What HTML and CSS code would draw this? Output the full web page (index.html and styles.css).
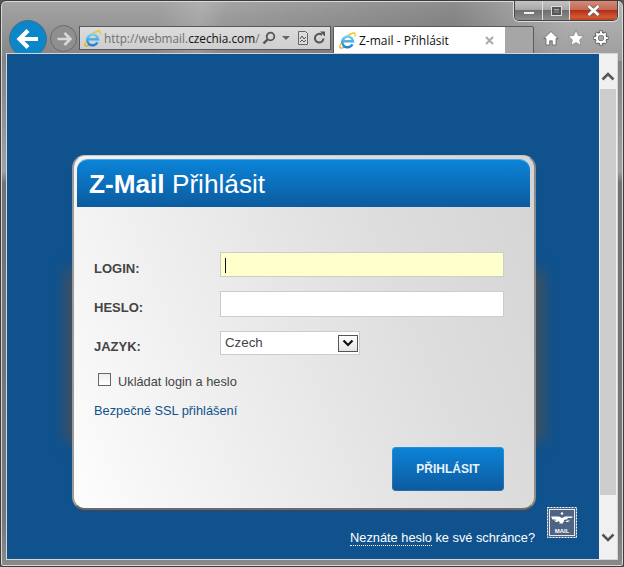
FILE: index.html
```html
<!DOCTYPE html>
<html lang="cs">
<head>
<meta charset="utf-8">
<title>Z-mail - Přihlásit</title>
<link rel="stylesheet" href="styles.css">
</head>
<body>
<svg class="defs" width="0" height="0" aria-hidden="true">
  <defs>
    <linearGradient id="ieblue" x1="0" y1="0" x2="0" y2="1">
      <stop offset="0" stop-color="#6fd0f6"/>
      <stop offset="1" stop-color="#1c82d4"/>
    </linearGradient>
    <symbol id="ie" viewBox="0 0 17 17">
      <path d="M1 13.500C3.500 7.500 9.500 2 14 1c2.200-.4 2.800 1.300 1.800 3.500" fill="none" stroke="#f5c518" stroke-width="1.300"/>
      <path d="M1 13.500c-.9 2.600 1.200 3.300 4.300 1.700" fill="none" stroke="#f0a818" stroke-width="1.300"/>
      <path d="M3.700 9.300h10.300A5.400 5.400 0 1 0 13.500 12.300" fill="none" stroke="url(#ieblue)" stroke-width="2.500"/>
    </symbol>
  </defs>
</svg>
<div class="window">
  <div class="wincontrols">
    <span class="wc wc-min"><i></i></span>
    <span class="wc wc-max"><i></i></span>
    <span class="wc wc-close">
      <svg width="15" height="11" viewBox="0 0 15 11"><path d="M2.500 1l10 9M12.500 1l-10 9" stroke="#666" stroke-width="4.200" fill="none"/><path d="M2.500 1l10 9M12.500 1l-10 9" stroke="#fff" stroke-width="2.600" fill="none"/></svg>
    </span>
  </div>
  <header class="toolbar">
    <span class="back">
      <svg width="24" height="22" viewBox="0 0 24 22"><path d="M12 2.500L3.500 11l8.500 8.500M4 11h18" fill="none" stroke="#fff" stroke-width="4.200"/></svg>
    </span>
    <span class="forward">
      <svg width="16" height="16" viewBox="0 0 16 16"><path d="M8.500 2l6 6-6 6M14 8H1.500" fill="none" stroke="#d8d8d8" stroke-width="2.600"/></svg>
    </span>
    <div class="address">
      <svg class="ie" width="17" height="17"><use href="#ie"/></svg>
      <span class="url">http://webmail.<b>czechia.com</b>/</span>
      <svg class="a-search" width="14" height="14" viewBox="0 0 14 14"><circle cx="8.500" cy="5.500" r="3.800" fill="none" stroke="#555" stroke-width="1.800"/><path d="M5.500 8.500L1.500 12.500" stroke="#555" stroke-width="2.400"/></svg>
      <span class="a-drop"></span>
      <svg class="a-compat" width="10" height="14" viewBox="0 0 10 14"><path d="M.5.500h7l2 2v11h-9z" fill="#ddd" stroke="#666"/><path d="M2 8l2-3 2 3 2-2M2 11l2-2 2 2 2-2" fill="none" stroke="#555"/></svg>
      <svg class="a-refresh" width="13" height="14" viewBox="0 0 13 14"><path d="M10.500 7.500a4.300 4.300 0 1 1-1.500-3.600" fill="none" stroke="#555" stroke-width="2"/><path d="M7 .5h5v5z" fill="#555"/></svg>
    </div>
    <div class="tab">
      <svg width="17" height="17"><use href="#ie"/></svg>
      <span class="tab-title">Z-mail - Přihlásit</span>
      <svg class="tab-x" width="9" height="9" viewBox="0 0 9 9"><path d="M1 1l7 7M8 1L1 8" stroke="#aaa" stroke-width="2"/></svg>
    </div>
    <div class="newtab"></div>
    <div class="tools">
      <svg width="16" height="16" viewBox="0 0 16 16"><path d="M8 1.500L.8 8.500H3V15h3.700v-4.200h2.600V15H13V8.500h2.200z" fill="#fff" stroke="#555" stroke-width=".7"/></svg>
      <svg width="16" height="16" viewBox="0 0 16 16"><path d="M8 .5l2.300 5 5.400.6-4 3.700 1.100 5.400L8 12.500l-4.800 2.700 1.100-5.400-4-3.700 5.400-.6z" fill="#fff" stroke="#666" stroke-width=".5"/></svg>
      <svg width="16" height="16" viewBox="0 0 16 16"><path d="M8 .5v3M8 12.500v3M.5 8h3M12.500 8h3M2.700 2.700l2.100 2.100M11.200 11.200l2.100 2.100M13.300 2.700l-2.100 2.100M4.800 11.200l-2.100 2.100" stroke="#5a5a5a" stroke-width="3.400"/><circle cx="8" cy="8" r="4.400" fill="none" stroke="#5a5a5a" stroke-width="3.600"/><path d="M8 1.200v3M8 11.800v3M1.200 8h3M11.800 8h3M3.200 3.200l2 2M10.800 10.800l2 2M12.800 3.200l-2 2M5.200 10.800l-2 2" stroke="#fff" stroke-width="2"/><circle cx="8" cy="8" r="4.200" fill="none" stroke="#fff" stroke-width="2.200"/></svg>
    </div>
  </header>
  <div class="viewport">
    <main class="page">
      <section class="card">
        <h1 class="card-title"><b>Z-Mail</b> Přihlásit</h1>
        <form class="form">
          <div class="row row-login">
            <label class="lbl">LOGIN:</label>
            <div class="field field-active"><span class="caret"></span></div>
          </div>
          <div class="row">
            <label class="lbl">HESLO:</label>
            <div class="field"></div>
          </div>
          <div class="row row-lang">
            <label class="lbl">JAZYK:</label>
            <div class="select">
              <span>Czech</span>
              <span class="select-btn">
                <svg width="12" height="8" viewBox="0 0 12 8"><path d="M1.500 1.500L6 6l4.500-4.500" fill="none" stroke="#111" stroke-width="2.200"/></svg>
              </span>
            </div>
          </div>
          <div class="remember"><span class="check"></span><span>Ukládat login a heslo</span></div>
          <a class="ssl">Bezpečné SSL přihlášení</a>
          <div class="actions"><span class="submit">PŘIHLÁSIT</span></div>
        </form>
      </section>
      <footer class="foot">
        <p class="foot-text"><a class="dotted">Neznáte heslo</a> ke své schránce?</p>
        <svg class="stamp" width="30" height="31" viewBox="0 0 30 31">
          <rect x="0.500" y="0.500" width="29" height="30" fill="#4e6484" stroke="#fff" stroke-width="1" stroke-dasharray="2 1"/>
          <rect x="2.500" y="2.500" width="25" height="26" fill="#4e6484" stroke="#e8e8e8" stroke-width="1"/>
          <circle cx="15" cy="6.500" r="1.200" fill="#fff"/>
          <path d="M4 9.500h8l3 1.500 3-1.500h8l-1.500 1.500h-3.500l-1 1.500h-2l-1.500 1.500 1 1h-1.500v1.500h-1V17.500v-1H12l1-1-1.500-1.500h-2l-1-1.500H5.500z" fill="#fff"/>
          <path d="M7 13.500h3l1.500 1.500H9zM23 13.500h-3L18.500 15H21z" fill="#fff"/>
          <text x="15" y="25.500" class="stamp-text" text-anchor="middle">MAIL</text>
        </svg>
      </footer>
    </main>
    <aside class="scrollbar">
      <span class="sb-btn"><svg width="14" height="9" viewBox="0 0 14 9"><path d="M1.500 7.500L7 2l5.500 5.500" fill="none" stroke="#555" stroke-width="2.500"/></svg></span>
      <div class="sb-track"><div class="sb-thumb"></div></div>
      <span class="sb-btn sb-down"><svg width="14" height="9" viewBox="0 0 14 9"><path d="M1.500 1.500L7 7l5.500-5.500" fill="none" stroke="#555" stroke-width="2.500"/></svg></span>
    </aside>
  </div>
</div>
</body>
</html>
```
FILE: styles.css
```css
* { box-sizing: border-box; }
html, body { margin: 0; padding: 0; }
body { width: 624px; height: 567px; overflow: hidden; font-family: "Liberation Sans", Arial, sans-serif; background: #555; }
.defs { position: absolute; }

.window {
  position: relative;
  width: 624px;
  height: 567px;
  padding: 0 6px 7px;
  border: 1px solid #3c3c3c;
  border-radius: 6px 6px 3px 3px;
  box-shadow: inset 0 0 0 1px #d8d8d8;
  background:
    linear-gradient(100deg, rgba(255,255,255,0) 25%, rgba(255,255,255,.14) 32%, rgba(255,255,255,0) 36%, rgba(0,0,0,.14) 72%, rgba(255,255,255,.2) 90%) 0 0 / 100% 60px no-repeat,
    linear-gradient(#a4a4a4, #848484 60px, #a0a0a0 170px, #727272 182px, #787878 520px, #8a8a8a);
  display: flex;
  flex-direction: column;
  overflow: hidden;
}

.wincontrols {
  position: absolute;
  top: 0;
  left: 513px;
  width: 104px;
  height: 20px;
  display: flex;
  border: 1px solid #444;
  border-top: 0;
  border-radius: 0 0 5px 5px;
  box-shadow: 0 0 0 1px #ddd;
  overflow: hidden;
}
.wc { display: flex; align-items: center; justify-content: center; background: linear-gradient(#c4c4c4, #a8a8a8 45%, #6f6f6f 50%, #8d8d8d); border-right: 1px solid #e0e0e0; }
.wc-min { width: 28px; align-items: flex-end; padding-bottom: 5px; }
.wc-min i { display: block; width: 12px; height: 4px; background: #eee; border: 1px solid #777; }
.wc-max { width: 27px; }
.wc-max i { display: block; width: 9px; height: 8px; border: 2px solid #555; box-shadow: 0 0 0 1px #ddd; }
.wc-close { flex: 1; border-right: 0; background: linear-gradient(#d58a78, #c56a55 45%, #b2301a 50%, #cf5a30 85%, #bb4024); }

.toolbar { height: 53px; flex: none; display: flex; align-items: flex-start; padding-top: 25px; position: relative; }
.back {
  width: 38px; height: 38px; margin: -6px 0 0 2px; flex: none;
  display: flex; align-items: center; justify-content: center;
  border-radius: 50%;
  background: #0b86c9;
  border: 1px solid #4c6e86;
}
.forward {
  width: 27px; height: 27px; margin: -1px 0 0 3px; flex: none;
  display: flex; align-items: center; justify-content: center;
  border-radius: 50%;
  border: 1px solid #6a6a6a;
  background: #8f8f8f;
}
.address {
  width: 252px; height: 24px; margin-left: 2px; flex: none;
  display: flex; align-items: center;
  padding-left: 4px;
  border: 1px solid #585858;
  background: linear-gradient(#dcdcdc, #cfcfcf);
  font-family: "Open Sans", sans-serif;
  font-size: 11.800px;
}
.url { margin-left: 3px; color: #707070; white-space: nowrap; width: 155px; flex: none; }
.url b { font-weight: 400; color: #111; }
.a-search { margin-left: 3px; flex: none; }
.a-drop { margin: 0 0 0 6px; width: 0; height: 0; border: 4px solid transparent; border-top: 4px solid #666; border-bottom: 0; flex: none; }
.a-compat { margin-left: 8px; flex: none; }
.a-refresh { margin-left: 5px; flex: none; }

.tab {
  width: 171px; height: 27px; margin: 1px 0 0 3px; flex: none;
  display: flex; align-items: center;
  padding-left: 5px;
  background: #fff;
  box-shadow: 0 -1px 0 #5a5a5a, -1px 0 0 #5a5a5a;
  font-family: "Open Sans", sans-serif;
  font-size: 12px;
  color: #111;
}
.tab-title { margin-left: 3px; width: 126px; white-space: nowrap; }
.tab-x { flex: none; }
.newtab { width: 28px; height: 27px; margin-top: 1px; flex: none; background: #a6a6a6; box-shadow: 0 -1px 0 #5a5a5a, 1px 0 0 #5a5a5a; }
.tools { margin-left: 10px; padding-top: 4px; display: flex; gap: 9px; }

.viewport { flex: 1; display: flex; min-height: 0; box-shadow: 0 0 0 1px #d5d5d5; position: relative; }
.page { flex: 1; position: relative; z-index: 0; padding: 101px 0 0 65px; background: #10528d; min-width: 0; }
.card {
  position: relative;
  width: 464px; height: 355px;
  padding: 3px 4px 0 3px;
  border-style: solid;
  border-width: 1px 2px 2px;
  border-color: #c8c8c8 #8c8c8c #6a6a6a #9a9a9a;
  border-radius: 13px;
  background: linear-gradient(68deg, #fdfdfd, #dedede 68%, #d4d4d4);
  box-shadow: 0 1px 1px #3c4c5e;
}
.card::after {
  content: "";
  position: absolute;
  z-index: -1;
  left: -9px; right: -10px; top: 112px; bottom: 64px;
  border-radius: 10px;
  background: #41505c;
  filter: blur(7px);
}
.card-title {
  margin: 0; height: 48px;
  padding: 8px 0 0 12px;
  border-radius: 11px 11px 0 0;
  border-top: 1px solid #4aaae8;
  background: linear-gradient(#0b84d8, #0c5b9e);
  color: #fff;
  font-size: 26.200px; line-height: 32px; font-weight: 400;
  white-space: nowrap;
}
.form { padding: 45px 26px 0 17px; }
.row { display: flex; height: 26px; margin-bottom: 14px; align-items: flex-start; }
.row-login { height: 25px; }
.row-lang { height: 24px; margin-bottom: 0; }
.lbl { width: 126px; padding-top: 9px; font-size: 13px; line-height: 16px; font-weight: 700; color: #444; }
.row-lang .lbl { padding-top: 8px; }
.field { width: 284px; height: 26px; background: #fff; border: 1px solid #ccc; }
.row-login .field { height: 25px; }
.field-active { background: #ffffcc; padding: 5px 0 0 4px; }
.caret { display: block; width: 1px; height: 15px; background: #111; }
.select {
  width: 140px; height: 24px; display: flex; align-items: center; justify-content: space-between;
  padding: 0 1px 2px 4px;
  background: #fff; border: 1px solid #ccc;
  font-size: 13.300px; color: #444;
}
.select-btn { width: 20px; height: 17px; margin-top: 2px; display: flex; align-items: center; justify-content: center; border: 1px solid #555; background: linear-gradient(#fff, #e4e4e4); }
.remember { display: flex; align-items: center; margin: 19px 0 0 4px; height: 15px; font-size: 12.800px; color: #444; }
.check { width: 13px; height: 13px; margin: -4px 7px 0 0; background: linear-gradient(#eee, #fff); border: 1px solid #666; flex: none; }
.ssl { display: block; margin-top: 14px; font-size: 12.800px; line-height: 16px; color: #10508c; }
.actions { display: flex; justify-content: flex-end; margin-top: 28px; }
.submit {
  width: 112px; height: 44px; display: flex; align-items: center; justify-content: center;
  border-radius: 4px;
  background: linear-gradient(#0b84d8, #0d5a9e);
  box-shadow: inset 0 0 0 1px rgba(255,255,255,.1);
  color: #e8f2fa; font-size: 12px; font-weight: 700;
}
.foot { width: 505px; margin-top: -3px; display: flex; justify-content: flex-end; align-items: flex-end; gap: 12px; height: 31px; position: relative; }
.foot-text { margin: 0 0 -8px; font-size: 12.800px; line-height: 16px; color: #fff; white-space: nowrap; }
.dotted { border-bottom: 1px dotted #fff; }
.stamp { flex: none; }
.stamp-text { font-size: 6px; font-weight: 700; fill: #fff; font-family: "Liberation Sans", sans-serif; }

.scrollbar { width: 18px; flex: none; display: flex; flex-direction: column; background: #f0f0f0; }
.sb-btn { height: 35px; flex: none; display: flex; align-items: center; justify-content: center; padding-top: 9px; }
.sb-down { height: 44px; padding-top: 0; }
.sb-track { flex: 1; display: flex; flex-direction: column; }
.sb-thumb { height: 406px; background: #cdcdcd; margin: 0 1px; }
```
